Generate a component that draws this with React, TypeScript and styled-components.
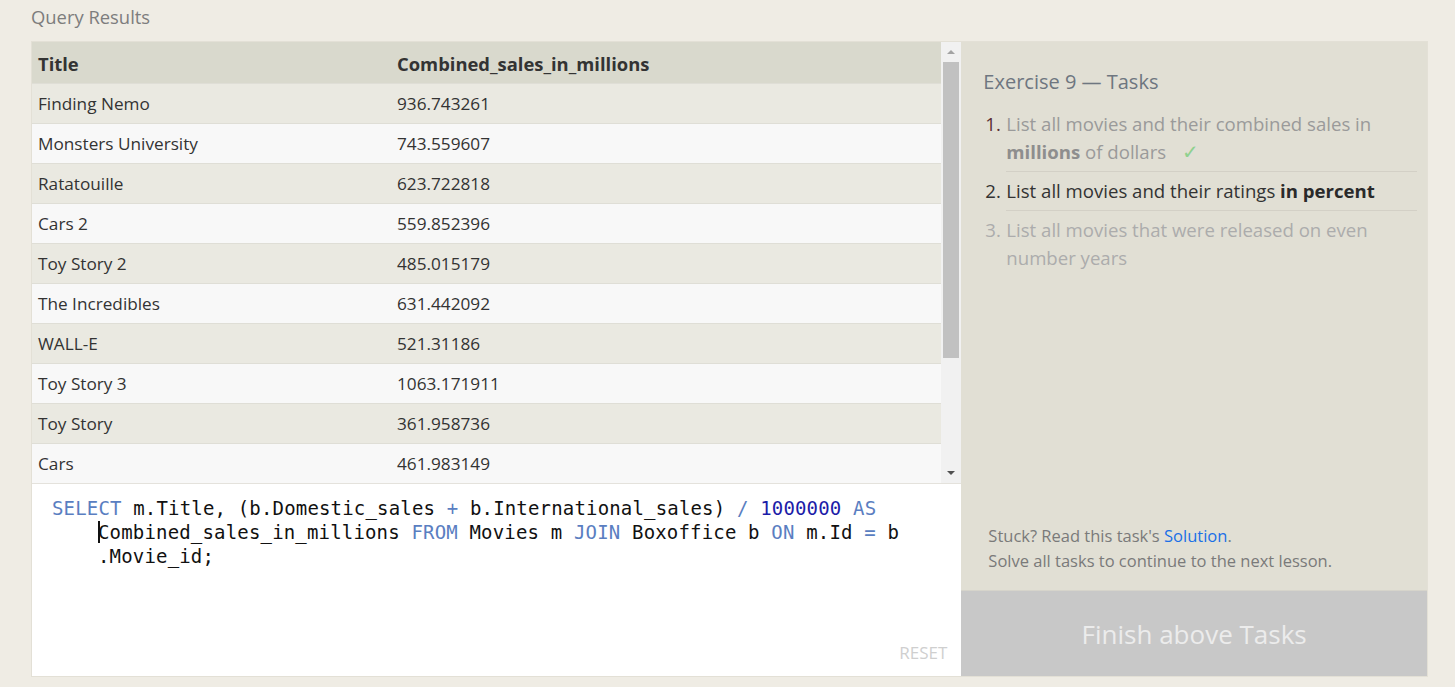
import React from "react";
import styled, { createGlobalStyle } from "styled-components";

const Global = createGlobalStyle`
  html, body { margin: 0; padding: 0; background: #efece4; }
  body { font-family: "Open Sans", "Noto Sans", sans-serif; }
  * { box-sizing: border-box; }
`;

const Page = styled.div`
  width: 1455px;
  height: 687px;
  padding: 4px 28px 0 31px;
  overflow: hidden;
`;

const Heading = styled.div`
  font-size: 18.4px;
  color: #7d7d7d;
  height: 37px;
  line-height: 26px;
`;

const Main = styled.div`
  display: flex;
  width: 1397px;
  height: 636px;
  border: 1px solid #e3e0d6;
`;

const Left = styled.div`
  width: 930px;
  display: flex;
  flex-direction: column;
  background: #fff;
`;

const TableArea = styled.div`
  display: flex;
  height: 442px;
  border-bottom: 1px solid #e4e2dc;
`;

const Table = styled.div`
  flex: 1;
  display: flex;
  flex-direction: column;
  overflow: hidden;
`;

const Row = styled.div<{ $bg: string; $h?: number }>`
  display: grid;
  grid-template-columns: 359px 1fr;
  align-items: center;
  height: ${(p) => p.$h ?? 40}px;
  flex: none;
  padding-left: 6px;
  padding-bottom: ${(p) => (p.$h ? 0 : 1)}px;
  background: ${(p) => p.$bg};
  border-bottom: 1px solid #dfded6;
  color: #333;
  font-size: 17.2px;
`;

const HeadCell = styled.div`
  font-weight: 700;
  font-size: 18.4px;
  color: #333;
  padding-top: 2px;
`;

const Cell = styled.div`
  white-space: nowrap;
`;

const Track = styled.div`
  width: 20px;
  background: #f1f1f1;
  display: flex;
  flex-direction: column;
  align-items: center;
`;

const Arrow = styled.div<{ $down?: boolean; $c: string }>`
  height: 20px;
  width: 100%;
  display: flex;
  align-items: center;
  justify-content: center;
  &::before {
    content: "";
    border-left: 4px solid transparent;
    border-right: 4px solid transparent;
    ${(p) =>
      p.$down
        ? `border-top: 4px solid ${p.$c};`
        : `border-bottom: 4px solid ${p.$c};`}
  }
`;

const Thumb = styled.div`
  width: 16px;
  height: 296px;
  background: #c1c1c1;
`;

const Spacer = styled.div`
  flex: 1;
`;

const Editor = styled.div`
  flex: 1;
  display: flex;
  flex-direction: column;
  padding: 12px 15px 12px 20px;
  background: #fff;
`;

const Code = styled.div`
  font-family: "DejaVu Sans Mono", "Liberation Mono", monospace;
  font-size: 19px;
  letter-spacing: 0.17px;
  line-height: 24px;
  color: #111;
  white-space: pre;
  flex: 1;
`;

const Line = styled.div<{ $indent?: boolean }>`
  padding-left: ${(p) => (p.$indent ? "46px" : "0")};
  position: relative;
`;

const Kw = styled.span`
  color: #5a7ec1;
`;

const Num = styled.span`
  color: #1c1ca8;
`;

const Cursor = styled.span`
  position: absolute;
  left: 46px;
  top: 1px;
  width: 2px;
  height: 22px;
  background: #111;
`;

const Reset = styled.div`
  align-self: flex-end;
  font-size: 17px;
  color: #cfcfcf;
  margin-right: -1px;
`;

const Right = styled.div`
  width: 466px;
  display: flex;
  flex-direction: column;
  background: #e1dfd4;
`;

const TaskPanel = styled.div`
  flex: 1;
  display: flex;
  flex-direction: column;
  padding: 26px 10px 17px 22px;
`;

const TaskTitle = styled.div`
  font-size: 20px;
  color: #6e7680;
  line-height: 28px;
  margin-bottom: 9px;
`;

const TaskList = styled.ol`
  margin: 0;
  padding: 0;
  list-style: none;
`;

const Task = styled.li<{ $state: "done" | "active" | "todo" }>`
  display: flex;
  font-size: 18.6px;
  line-height: 28px;
  padding: 5px 0;
  color: ${(p) => (p.$state === "active" ? "#333" : p.$state === "done" ? "#9a9a9a" : "#acacac")};
  b {
    color: ${(p) => (p.$state === "active" ? "#2a2a2a" : "#8e8e8e")};
  }
`;

const TaskNum = styled.span<{ $color: string }>`
  width: 23px;
  flex: none;
  padding-left: 2px;
  color: ${(p) => p.$color};
`;

const TaskBody = styled.div`
  flex: 1;
`;

const TaskItem = styled.div`
  display: block;
`;

const Divider = styled.div`
  height: 1px;
  background: #d3d0c6;
  margin-left: 23px;
`;

const Check = styled.span`
  color: #8fd18f;
  margin-left: 16px;
  font-size: 20px;
`;

const Footer = styled.div`
  margin-top: auto;
  padding-left: 5px;
  font-size: 16.5px;
  line-height: 25px;
  color: #7a7a7a;
`;

const Link = styled.a`
  color: #1a6fe6;
  text-decoration: none;
`;

const FinishButton = styled.div`
  height: 86px;
  background: #c8c8c8;
  color: #ececec;
  font-size: 26px;
  display: flex;
  align-items: center;
  justify-content: center;
  border-top: 1px solid #d6d4cb;
`;

const rows: [string, string][] = [
  ["Finding Nemo", "936.743261"],
  ["Monsters University", "743.559607"],
  ["Ratatouille", "623.722818"],
  ["Cars 2", "559.852396"],
  ["Toy Story 2", "485.015179"],
  ["The Incredibles", "631.442092"],
  ["WALL-E", "521.31186"],
  ["Toy Story 3", "1063.171911"],
  ["Toy Story", "361.958736"],
  ["Cars", "461.983149"],
];

export default function App() {
  return (
    <>
      <Global />
      <Page>
        <Heading>Query Results</Heading>
        <Main>
          <Left>
            <TableArea>
              <Table>
                <Row $bg="#d9d9cd" $h={42}>
                  <HeadCell>Title</HeadCell>
                  <HeadCell>Combined_sales_in_millions</HeadCell>
                </Row>
                {rows.map(([t, v], i) => (
                  <Row key={t} $bg={i % 2 === 0 ? "#eae9e1" : "#f8f8f8"}>
                    <Cell>{t}</Cell>
                    <Cell>{v}</Cell>
                  </Row>
                ))}
              </Table>
              <Track>
                <Arrow $c="#a3a3a3" />
                <Thumb />
                <Spacer />
                <Arrow $down $c="#505050" />
              </Track>
            </TableArea>
            <Editor>
              <Code>
                <Line>
                  <Kw>SELECT</Kw> m.Title, (b.Domestic_sales <Kw>+</Kw> b.International_sales) <Kw>/</Kw>{" "}
                  <Num>1000000</Num> <Kw>AS</Kw>
                </Line>
                <Line $indent>
                  <Cursor />
                  Combined_sales_in_millions <Kw>FROM</Kw> Movies m <Kw>JOIN</Kw> Boxoffice b <Kw>ON</Kw> m.Id{" "}
                  <Kw>=</Kw> b
                </Line>
                <Line $indent>.Movie_id;</Line>
              </Code>
              <Reset>RESET</Reset>
            </Editor>
          </Left>
          <Right>
            <TaskPanel>
              <TaskTitle>Exercise 9 — Tasks</TaskTitle>
              <TaskList>
                <TaskItem>
                  <Task $state="done">
                    <TaskNum $color="#5b2f33">1.</TaskNum>
                    <TaskBody>
                      List all movies and their combined sales in <b>millions</b> of dollars
                      <Check>✓</Check>
                    </TaskBody>
                  </Task>
                  <Divider />
                </TaskItem>
                <TaskItem>
                  <Task $state="active">
                    <TaskNum $color="#333">2.</TaskNum>
                    <TaskBody>
                      List all movies and their ratings <b>in percent</b>
                    </TaskBody>
                  </Task>
                  <Divider />
                </TaskItem>
                <TaskItem>
                  <Task $state="todo">
                    <TaskNum $color="#acacac">3.</TaskNum>
                    <TaskBody>List all movies that were released on even number years</TaskBody>
                  </Task>
                </TaskItem>
              </TaskList>
              <Footer>
                Stuck? Read this task's <Link href="#">Solution</Link>.
                <br />
                Solve all tasks to continue to the next lesson.
              </Footer>
            </TaskPanel>
            <FinishButton>Finish above Tasks</FinishButton>
          </Right>
        </Main>
      </Page>
    </>
  );
}
